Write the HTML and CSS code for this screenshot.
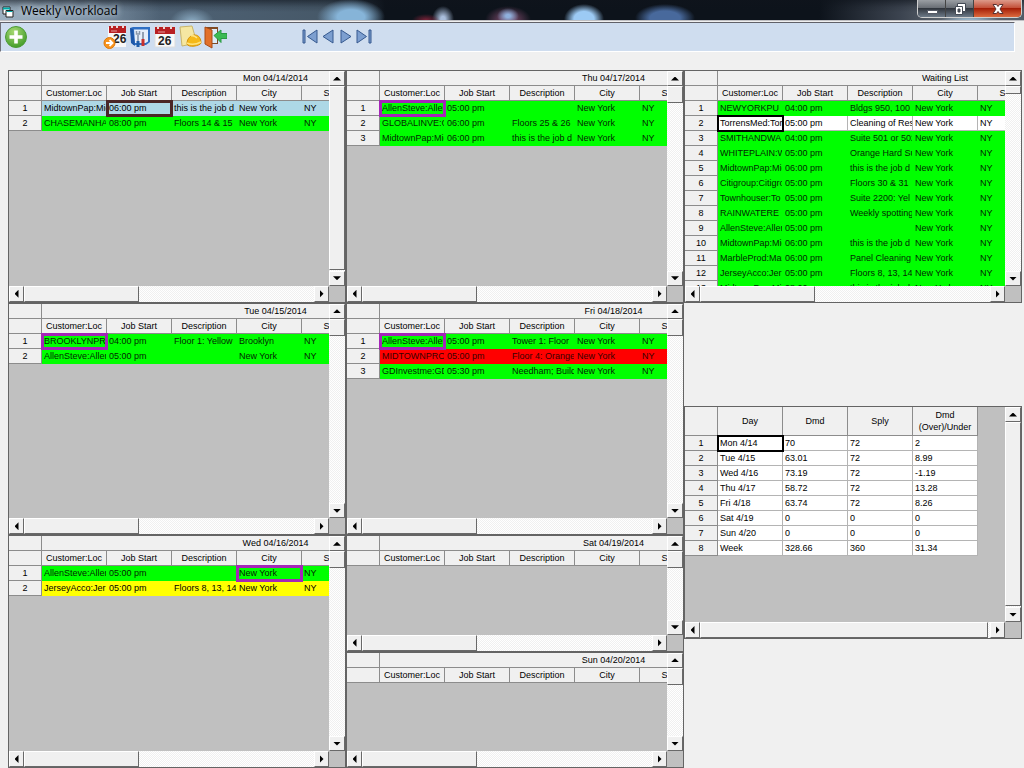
FILE: index.html
```html
<!DOCTYPE html>
<html lang="en">
<head>
<meta charset="utf-8">
<title>Weekly Workload</title>
<link rel="stylesheet" href="styles.css">
</head>
<body>
<header class="titlebar">
  <svg class="app-icon" viewBox="0 0 12 12"><path d="M1 1h7v7H1z" fill="#fff" stroke="#222"/><path d="M1 2.500h7" stroke="#0aa" stroke-width="2"/><path d="M4 4.500h7V11H4z" fill="#fff" stroke="#222"/><path d="M4.500 5.500h6" stroke="#0aa"/></svg>
  <h1 class="title">Weekly Workload</h1>
  <div class="glow"></div>
  <div class="window-controls">
    <button class="win" aria-label="Minimize"><svg width="14" height="14" viewBox="0 0 14 14"><path d="M2.500 8.500h10v3h-10z" fill="#fff" stroke="#555a66"/></svg></button>
    <button class="win" aria-label="Restore"><svg width="14" height="14" viewBox="0 0 14 14"><path d="M4.500 1.500h8v8h-8z" fill="#fff" stroke="#444a55"/><path d="M2.500 4.500h7v8h-7z" fill="#fff" stroke="#444a55"/><path d="M5 7h2v3H5z" fill="#444a55" stroke="#444a55"/></svg></button>
    <button class="win close" aria-label="Close"><svg width="14" height="14" viewBox="0 0 14 14"><path d="M2 2.500h3.500L7 4.500l1.500-2H12L9 7l3 4.500H8.500L7 9.500l-1.500 2H2L5 7z" fill="#fff" stroke="#5a3030"/></svg></button>
  </div>
</header>
<nav class="toolbar">
  <button class="tool add" aria-label="Add"><svg viewBox="0 0 24 24"><defs><radialGradient id="gr" cx=".4" cy=".25" r=".8"><stop offset="0" stop-color="#a6d873"/><stop offset="1" stop-color="#3f9a26"/></radialGradient></defs><circle cx="12" cy="12" r="10.500" fill="url(#gr)" stroke="#4b9b34"/><path d="M12 5.500v13M5.500 12h13" stroke="#fff" stroke-width="3.600"/></svg></button>
  <div class="tools">
    <button class="tool" aria-label="Go to date"><svg viewBox="0 0 24 24"><path d="M5 2h18v20H5z" fill="#f8f8f8"/><path d="M6 1h17v7H6z" fill="#b81f22"/><path d="M9 0v3M14 0v3M20 0v3" stroke="#e9d8d8" stroke-width="2"/><path d="M8 6h6" stroke="#e49a9a"/><text x="10" y="18" class="day">26</text><circle cx="6.500" cy="18" r="5.500" fill="#f7931e" stroke="#e07808"/><path d="M3 18h6M6.500 15l3 3-3 3" stroke="#fff" stroke-width="1.800" fill="none"/></svg></button>
    <button class="tool" aria-label="Settings"><svg viewBox="0 0 24 24"><path d="M2 3l3-1h17v15l-4 3H5z" fill="#2f6fc4"/><path d="M6 4.500h14v12L17.500 18H7z" fill="#e6eef9"/><path d="M2 3l3 1L7 21l-4-3z" fill="#1d57a8"/><path d="M10 10v8" stroke="#9aa8ba" stroke-width="2"/><path d="M8.500 6v3h3V6" stroke="#8a98aa" stroke-width="1.500" fill="none"/><path d="M15 7v7" stroke="#788698" stroke-width="1.500"/><path d="M15 14v7" stroke="#c9302c" stroke-width="3"/><path d="M10 16v6" stroke="#1f5da9" stroke-width="3"/></svg></button>
    <button class="tool" aria-label="Calendar"><svg viewBox="0 0 24 24"><path d="M2 2h20v20H2z" fill="#f8f8f8" stroke="#ddd"/><path d="M2 2h20v7H2z" fill="#b81f22"/><path d="M5 0v4M11 0v4M18 0v4" stroke="#e9d8d8" stroke-width="2"/><path d="M5 7h7" stroke="#e49a9a"/><text x="5" y="20" class="day">26</text></svg></button>
    <button class="tool" aria-label="Job notes"><svg viewBox="0 0 24 24"><path d="M2 2l12-1 5 17-15 3z" fill="#f5e7a2" stroke="#c9b56a"/><path d="M9 19c0-6 4-9 8-9 4 0 6 4 6 8-1 3-13 5-14 1z" fill="#f5b919" stroke="#d49208"/><path d="M9 18c4 2 10 1 14-1M13 11c2-1 4 0 6 2" stroke="#ffe480" stroke-width="1.500" fill="none"/></svg></button>
    <button class="tool" aria-label="Exit"><svg viewBox="0 0 24 24"><path d="M2 2h13v17H2z" fill="#7f4a25"/><path d="M6 4h8v14H6z" fill="#dcecf8"/><path d="M2 2l7 3v18l-7-4z" fill="#e2702a" stroke="#a84a17"/><path d="M11 10.500L18 5v3.500h6v5h-6v4z" fill="#3cba54" stroke="#2a9a42"/></svg></button>
  </div>
  <div class="pager">
    <button class="tool" aria-label="First"><svg viewBox="0 0 18 18"><path d="M2 2h2v13H2z" class="nav"/><path d="M16 2v13L6.500 8.500z" class="nav"/></svg></button>
    <button class="tool" aria-label="Previous"><svg viewBox="0 0 18 18"><path d="M14 2v13L4 8.500z" class="nav"/></svg></button>
    <button class="tool" aria-label="Next"><svg viewBox="0 0 18 18"><path d="M4 2v13l10-6.500z" class="nav"/></svg></button>
    <button class="tool" aria-label="Last"><svg viewBox="0 0 18 18"><path d="M2 2v13l9.500-6.500z" class="nav"/><path d="M14 2h2v13h-2z" class="nav"/></svg></button>
  </div>
</nav>
<main class="board">
  <div class="column">
    <section class="panel">
      <div class="view"><table class="grid">
        <colgroup><col class="c-num"><col class="c"><col class="c"><col class="c"><col class="c"><col class="c"><col class="c-rest"></colgroup>
        <tr><th></th><th colspan="6">Mon 04/14/2014</th></tr>
        <tr><th></th><th>Customer:Loc</th><th>Job Start</th><th>Description</th><th>City</th><th>State</th><th></th></tr>
        <tr class="blue"><th>1</th><td>MidtownPap:Mid</td><td class="sel brown">06:00 pm</td><td>this is the job d</td><td>New York</td><td>NY</td><td></td></tr>
        <tr class="green"><th>2</th><td>CHASEMANHA</td><td>08:00 pm</td><td>Floors 14 &amp; 15</td><td>New York</td><td>NY</td><td></td></tr>
      </table></div>
      <div class="vbar"><button class="arrow up" aria-label="Scroll up"></button><div class="track"><div class="thumb long"></div></div><button class="arrow down" aria-label="Scroll down"></button></div>
      <div class="hbar"><button class="arrow left" aria-label="Scroll left"></button><div class="track"><div class="thumb"></div></div><button class="arrow right" aria-label="Scroll right"></button></div>
    </section>
    <section class="panel">
      <div class="view"><table class="grid">
        <colgroup><col class="c-num"><col class="c"><col class="c"><col class="c"><col class="c"><col class="c"><col class="c-rest"></colgroup>
        <tr><th></th><th colspan="6">Tue 04/15/2014</th></tr>
        <tr><th></th><th>Customer:Loc</th><th>Job Start</th><th>Description</th><th>City</th><th>State</th><th></th></tr>
        <tr class="green"><th>1</th><td class="sel">BROOKLYNPR</td><td>04:00 pm</td><td>Floor 1: Yellow</td><td>Brooklyn</td><td>NY</td><td></td></tr>
        <tr class="green"><th>2</th><td>AllenSteve:Allen</td><td>05:00 pm</td><td></td><td>New York</td><td>NY</td><td></td></tr>
      </table></div>
      <div class="vbar"><button class="arrow up" aria-label="Scroll up"></button><div class="track"><div class="thumb"></div></div><button class="arrow down" aria-label="Scroll down"></button></div>
      <div class="hbar"><button class="arrow left" aria-label="Scroll left"></button><div class="track"><div class="thumb"></div></div><button class="arrow right" aria-label="Scroll right"></button></div>
    </section>
    <section class="panel">
      <div class="view"><table class="grid">
        <colgroup><col class="c-num"><col class="c"><col class="c"><col class="c"><col class="c"><col class="c"><col class="c-rest"></colgroup>
        <tr><th></th><th colspan="6">Wed 04/16/2014</th></tr>
        <tr><th></th><th>Customer:Loc</th><th>Job Start</th><th>Description</th><th>City</th><th>State</th><th></th></tr>
        <tr class="green"><th>1</th><td>AllenSteve:Allen</td><td>05:00 pm</td><td></td><td class="sel">New York</td><td>NY</td><td></td></tr>
        <tr class="yellow"><th>2</th><td>JerseyAcco:Jer</td><td>05:00 pm</td><td>Floors 8, 13, 14</td><td>New York</td><td>NY</td><td></td></tr>
      </table></div>
      <div class="vbar"><button class="arrow up" aria-label="Scroll up"></button><div class="track"><div class="thumb"></div></div><button class="arrow down" aria-label="Scroll down"></button></div>
      <div class="hbar"><button class="arrow left" aria-label="Scroll left"></button><div class="track"><div class="thumb"></div></div><button class="arrow right" aria-label="Scroll right"></button></div>
    </section>
  </div>
  <div class="column weekend">
    <section class="panel">
      <div class="view"><table class="grid">
        <colgroup><col class="c-num"><col class="c"><col class="c"><col class="c"><col class="c"><col class="c"><col class="c-rest"></colgroup>
        <tr><th></th><th colspan="6">Thu 04/17/2014</th></tr>
        <tr><th></th><th>Customer:Loc</th><th>Job Start</th><th>Description</th><th>City</th><th>State</th><th></th></tr>
        <tr class="green"><th>1</th><td class="sel">AllenSteve:Allen</td><td>05:00 pm</td><td></td><td>New York</td><td>NY</td><td></td></tr>
        <tr class="green"><th>2</th><td>GLOBALINVE:G</td><td>06:00 pm</td><td>Floors 25 &amp; 26</td><td>New York</td><td>NY</td><td></td></tr>
        <tr class="green"><th>3</th><td>MidtownPap:Mid</td><td>06:00 pm</td><td>this is the job d</td><td>New York</td><td>NY</td><td></td></tr>
      </table></div>
      <div class="vbar"><button class="arrow up" aria-label="Scroll up"></button><div class="track"><div class="thumb"></div></div><button class="arrow down" aria-label="Scroll down"></button></div>
      <div class="hbar"><button class="arrow left" aria-label="Scroll left"></button><div class="track"><div class="thumb"></div></div><button class="arrow right" aria-label="Scroll right"></button></div>
    </section>
    <section class="panel">
      <div class="view"><table class="grid">
        <colgroup><col class="c-num"><col class="c"><col class="c"><col class="c"><col class="c"><col class="c"><col class="c-rest"></colgroup>
        <tr><th></th><th colspan="6">Fri 04/18/2014</th></tr>
        <tr><th></th><th>Customer:Loc</th><th>Job Start</th><th>Description</th><th>City</th><th>State</th><th></th></tr>
        <tr class="green"><th>1</th><td class="sel">AllenSteve:Allen</td><td>05:00 pm</td><td>Tower 1: Floor</td><td>New York</td><td>NY</td><td></td></tr>
        <tr class="red"><th>2</th><td>MIDTOWNPRO</td><td>05:00 pm</td><td>Floor 4: Orange</td><td>New York</td><td>NY</td><td></td></tr>
        <tr class="green"><th>3</th><td>GDInvestme:GD</td><td>05:30 pm</td><td>Needham; Build</td><td>New York</td><td>NY</td><td></td></tr>
      </table></div>
      <div class="vbar"><button class="arrow up" aria-label="Scroll up"></button><div class="track"><div class="thumb"></div></div><button class="arrow down" aria-label="Scroll down"></button></div>
      <div class="hbar"><button class="arrow left" aria-label="Scroll left"></button><div class="track"><div class="thumb"></div></div><button class="arrow right" aria-label="Scroll right"></button></div>
    </section>
    <section class="panel">
      <div class="view"><table class="grid">
        <colgroup><col class="c-num"><col class="c"><col class="c"><col class="c"><col class="c"><col class="c"><col class="c-rest"></colgroup>
        <tr><th></th><th colspan="6">Sat 04/19/2014</th></tr>
        <tr><th></th><th>Customer:Loc</th><th>Job Start</th><th>Description</th><th>City</th><th>State</th><th></th></tr>
      </table></div>
      <div class="vbar"><button class="arrow up" aria-label="Scroll up"></button><div class="track"><div class="thumb"></div></div><button class="arrow down" aria-label="Scroll down"></button></div>
      <div class="hbar"><button class="arrow left" aria-label="Scroll left"></button><div class="track"><div class="thumb"></div></div><button class="arrow right" aria-label="Scroll right"></button></div>
    </section>
    <section class="panel">
      <div class="view"><table class="grid">
        <colgroup><col class="c-num"><col class="c"><col class="c"><col class="c"><col class="c"><col class="c"><col class="c-rest"></colgroup>
        <tr><th></th><th colspan="6">Sun 04/20/2014</th></tr>
        <tr><th></th><th>Customer:Loc</th><th>Job Start</th><th>Description</th><th>City</th><th>State</th><th></th></tr>
      </table></div>
      <div class="vbar"><button class="arrow up" aria-label="Scroll up"></button><div class="track"><div class="thumb"></div></div><button class="arrow down" aria-label="Scroll down"></button></div>
      <div class="hbar"><button class="arrow left" aria-label="Scroll left"></button><div class="track"><div class="thumb"></div></div><button class="arrow right" aria-label="Scroll right"></button></div>
    </section>
  </div>
  <div class="column side">
    <section class="panel">
      <div class="view"><table class="grid waiting">
        <colgroup><col class="c-num"><col class="c"><col class="c"><col class="c"><col class="c"><col class="c"><col class="c-rest"></colgroup>
        <tr><th></th><th colspan="6">Waiting List</th></tr>
        <tr><th></th><th>Customer:Loc</th><th>Job Start</th><th>Description</th><th>City</th><th>State</th><th></th></tr>
        <tr class="green"><th>1</th><td>NEWYORKPU</td><td>04:00 pm</td><td>Bldgs 950, 100</td><td>New York</td><td>NY</td><td></td></tr>
        <tr class="white"><th>2</th><td class="sel black">TorrensMed:Tor</td><td>05:00 pm</td><td>Cleaning of Res</td><td>New York</td><td>NY</td><td></td></tr>
        <tr class="green"><th>3</th><td>SMITHANDWA</td><td>04:00 pm</td><td>Suite 501 or 502</td><td>New York</td><td>NY</td><td></td></tr>
        <tr class="green"><th>4</th><td>WHITEPLAIN:W</td><td>05:00 pm</td><td>Orange Hard Su</td><td>New York</td><td>NY</td><td></td></tr>
        <tr class="green"><th>5</th><td>MidtownPap:Mid</td><td>06:00 pm</td><td>this is the job d</td><td>New York</td><td>NY</td><td></td></tr>
        <tr class="green"><th>6</th><td>Citigroup:Citigro</td><td>05:00 pm</td><td>Floors 30 &amp; 31</td><td>New York</td><td>NY</td><td></td></tr>
        <tr class="green"><th>7</th><td>Townhouser:To</td><td>05:00 pm</td><td>Suite 2200: Yel</td><td>New York</td><td>NY</td><td></td></tr>
        <tr class="green"><th>8</th><td>RAINWATERE</td><td>05:00 pm</td><td>Weekly spotting</td><td>New York</td><td>NY</td><td></td></tr>
        <tr class="green"><th>9</th><td>AllenSteve:Allen</td><td>05:00 pm</td><td></td><td>New York</td><td>NY</td><td></td></tr>
        <tr class="green"><th>10</th><td>MidtownPap:Mid</td><td>06:00 pm</td><td>this is the job d</td><td>New York</td><td>NY</td><td></td></tr>
        <tr class="green"><th>11</th><td>MarbleProd:Mar</td><td>06:00 pm</td><td>Panel Cleaning</td><td>New York</td><td>NY</td><td></td></tr>
        <tr class="green"><th>12</th><td>JerseyAcco:Jer</td><td>05:00 pm</td><td>Floors 8, 13, 14</td><td>New York</td><td>NY</td><td></td></tr>
        <tr class="green"><th>13</th><td>MidtownPap:Mid</td><td>08:00 pm</td><td>this is the job d</td><td>New York</td><td>NY</td><td></td></tr>
      </table></div>
      <div class="vbar"><button class="arrow up" aria-label="Scroll up"></button><div class="track"><div class="thumb short"></div></div><button class="arrow down" aria-label="Scroll down"></button></div>
      <div class="hbar"><button class="arrow left" aria-label="Scroll left"></button><div class="track"><div class="thumb"></div></div><button class="arrow right" aria-label="Scroll right"></button></div>
    </section>
    <section class="panel summary">
      <div class="view"><table class="grid totals">
        <colgroup><col class="c-num"><col class="c"><col class="c"><col class="c"><col class="c"></colgroup>
        <tr class="tall"><th></th><th>Day</th><th>Dmd</th><th>Sply</th><th>Dmd<br>(Over)/Under</th></tr>
        <tr class="white"><th>1</th><td class="sel black">Mon 4/14</td><td>70</td><td>72</td><td>2</td></tr>
        <tr class="white"><th>2</th><td>Tue 4/15</td><td>63.01</td><td>72</td><td>8.99</td></tr>
        <tr class="white"><th>3</th><td>Wed 4/16</td><td>73.19</td><td>72</td><td>-1.19</td></tr>
        <tr class="white"><th>4</th><td>Thu 4/17</td><td>58.72</td><td>72</td><td>13.28</td></tr>
        <tr class="white"><th>5</th><td>Fri 4/18</td><td>63.74</td><td>72</td><td>8.26</td></tr>
        <tr class="white"><th>6</th><td>Sat 4/19</td><td>0</td><td>0</td><td>0</td></tr>
        <tr class="white"><th>7</th><td>Sun 4/20</td><td>0</td><td>0</td><td>0</td></tr>
        <tr class="white"><th>8</th><td>Week</td><td>328.66</td><td>360</td><td>31.34</td></tr>
      </table></div>
      <div class="vbar"><button class="arrow up" aria-label="Scroll up"></button><div class="track"><div class="thumb long"></div></div><button class="arrow down" aria-label="Scroll down"></button></div>
      <div class="hbar"><button class="arrow left" aria-label="Scroll left"></button><div class="track"><div class="thumb long"></div></div><button class="arrow right" aria-label="Scroll right"></button></div>
    </section>
  </div>
</main>
</body>
</html>
```
FILE: styles.css
```css
* { box-sizing: border-box; }

body {
  margin: 0;
  height: 100vh;
  display: flex;
  flex-direction: column;
  overflow: hidden;
  background: #f0f0f0;
  color: #000;
  font: 9px/14px "Liberation Sans", Arial, sans-serif;
}

button {
  border: 0;
  padding: 0;
  margin: 0;
  background: none;
}

/* Title bar */
.titlebar {
  position: relative;
  display: flex;
  align-items: flex-start;
  height: 21px;
  flex: none;
  padding-right: 2px;
  border-bottom: 1px solid #c0c0c4;
  background:
    linear-gradient(90deg, #9fb2c2 0, #7e92a5 90px, transparent 160px),
    linear-gradient(90deg, transparent 80%, #3c4450 88%, #6b737c 94%, #505a66),
    linear-gradient(90deg, #566b80 0, #465868 330px, #0d131b 385px, #0d131b);
}

.titlebar::before {
  content: "";
  position: absolute;
  inset: 0;
  background: linear-gradient(rgba(15, 20, 28, .6), rgba(15, 20, 28, .15) 7px, transparent 12px);
}

.glow {
  position: absolute;
  inset: 0;
  background:
    radial-gradient(ellipse 22px 14px at 192px 22px, #8fb0c8, transparent),
    radial-gradient(ellipse 34px 18px at 351px 17px, #86b4d8 40%, transparent),
    radial-gradient(ellipse 14px 6px at 426px 20px, #7a2238, transparent),
    radial-gradient(ellipse 11px 13px at 443px 19px, #a9bddb 20%, transparent),
    radial-gradient(ellipse 11px 8px at 508px 16px, #8fb0dc 20%, transparent),
    radial-gradient(ellipse 23px 14px at 508px 20px, #68405c 30%, transparent),
    radial-gradient(ellipse 20px 15px at 584px 19px, #9ccaf4 50%, transparent),
    radial-gradient(ellipse 30px 14px at 665px 18px, #48699c 50%, transparent),
    radial-gradient(ellipse 30px 8px at 970px 22px, #a8d0ec, transparent);
}

.app-icon {
  position: relative;
  z-index: 1;
  width: 12px;
  height: 12px;
  margin: 6px 7px 0 2px;
}

.title {
  position: relative;
  z-index: 1;
  margin: 2px 0 0;
  flex: 1;
  font: 12px/18px "Open Sans", sans-serif;
  color: #000;
  text-shadow: 0 0 6px #c3d1dc, 0 0 6px #b5c5d2;
}

.window-controls {
  position: relative;
  z-index: 1;
  display: flex;
  height: 18px;
  border: 1px solid #d0d0d0;
  border-top: 0;
  border-radius: 0 0 5px 5px;
  overflow: hidden;
}

.win {
  width: 28px;
  display: flex;
  align-items: center;
  justify-content: center;
  border-right: 1px solid #444;
  background: linear-gradient(#9a9ea3, #6a6f76 45%, #31363e 50%, #6d7a88);
}

.win.close {
  width: 47px;
  border-right: 0;
  background: linear-gradient(#dd9a8a, #c4523b 45%, #a51f08 50%, #dc6a3e);
}

/* Toolbar */
.toolbar {
  display: flex;
  flex: none;
  height: 30px;
  margin: 1px 9px 0 0;
  padding: 1px 0 0 2px;
  border: 1px solid #fff;
  border-top: 1px solid #606068;
  border-left-color: #707078;
  background: #cfddef;
}

.tool {
  width: 25px;
  height: 26px;
  flex: none;
  display: flex;
  align-items: center;
  justify-content: center;
}

.tool svg {
  width: 24px;
  height: 24px;
}

.tools {
  display: flex;
  margin-left: 74px;
}

.pager {
  display: flex;
  margin-left: 74px;
}

.pager .tool { width: 18px; height: 25px; }
.pager svg { width: 18px; height: 18px; }

.nav {
  fill: #7d9fd0;
  stroke: #36598f;
}

.day {
  font: bold 12px "Liberation Sans", Arial, sans-serif;
  fill: #222;
}

/* Board */
.board {
  flex: 1;
  min-height: 0;
  display: grid;
  grid-template-columns: 1fr 1fr 1fr;
  padding: 18px 2px 0 8px;
}

.column {
  display: grid;
  grid-template-rows: 1fr 1fr 1fr;
  min-width: 0;
  min-height: 0;
}

.weekend { grid-template-rows: 2fr 2fr 1fr 1fr; }
.side { grid-template-rows: 233fr 103fr 233fr 129fr; }
.summary { grid-row: 3; }

.panel {
  min-height: 0;
  display: grid;
  grid-template-columns: minmax(0, 1fr) 16px;
  grid-template-rows: minmax(0, 1fr) 16px;
  border: 1px solid #646464;
  background: #c0c0c0;
}

.view { overflow: hidden; }

.grid {
  width: 501px;
  table-layout: fixed;
  border-collapse: separate;
  border-spacing: 0;
}

.waiting { width: 488px; }
.totals { width: 293px; }
.c-num { width: 33px; }
.c { width: 65px; }

.grid th,
.grid td {
  height: 15px;
  padding: 0;
  overflow: hidden;
  white-space: nowrap;
  font-weight: normal;
  border-right: 1px solid #8c8c8c;
  border-bottom: 1px solid #8c8c8c;
}

.grid th {
  background: #f0f0f0;
  text-align: center;
}

.grid td {
  padding-left: 2px;
  text-align: left;
}

.grid .tall th {
  height: 29px;
  line-height: 12px;
}

.green td { background: #0f0; border-color: #0f0; color: #032803; }
.yellow td { background: #ff0; border-color: #ff0; }
.red td { background: #f00; border-color: #f00; color: #3a0000; }
.blue td { background: #add8e6; border-color: #add8e6; }
.white td { background: #fff; border-color: #b4b4b4; }

.grid .sel {
  outline: 3px solid #a526b8;
  outline-offset: -2px;
}

.grid .brown { outline-color: #4a2626; }
.grid .black { outline: 2px solid #000; outline-offset: -1px; }

/* Scroll bars */
.vbar,
.hbar {
  display: flex;
  min-width: 0;
  min-height: 0;
}

.vbar { flex-direction: column; }

.track {
  flex: 1;
  min-width: 0;
  min-height: 0;
  background: repeating-conic-gradient(#fff 0 25%, #f0f0f0 0 50%) 0 0 / 2px 2px;
}

.thumb,
.arrow {
  background: #f0f0f0;
  border: 1px solid #fff;
  border-right-color: #696969;
  border-bottom-color: #696969;
}

.vbar .thumb { height: 17px; }
.vbar .short { height: 8px; }
.vbar .long { height: calc(100% - 1px); }
.hbar .thumb { height: 16px; width: 115px; }
.hbar .long { width: calc(100% - 2px); }

.arrow {
  flex: none;
  display: flex;
  align-items: center;
  justify-content: center;
}

.vbar .arrow { width: 16px; height: 15px; }
.hbar .arrow { width: 15px; height: 16px; }

.arrow::before {
  content: "";
  width: 8px;
  height: 4px;
  background: #000;
  clip-path: polygon(50% 0, 100% 100%, 0 100%);
}

.down::before { clip-path: polygon(0 0, 100% 0, 50% 100%); }

.left::before,
.right::before { width: 4px; height: 8px; }

.left::before { clip-path: polygon(0 50%, 100% 0, 100% 100%); }
.right::before { clip-path: polygon(0 0, 100% 50%, 0 100%); }
```
